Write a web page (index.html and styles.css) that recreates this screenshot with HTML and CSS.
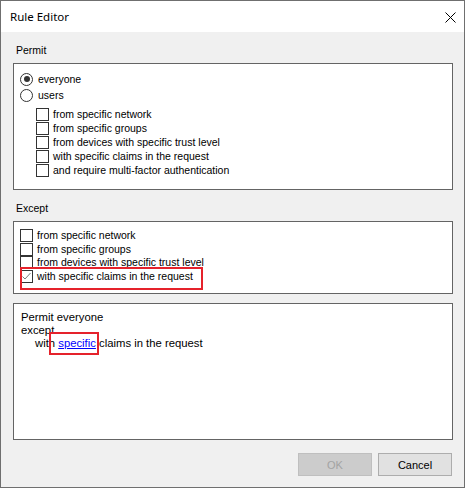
FILE: index.html
```html
<!DOCTYPE html>
<html>
<head>
<meta charset="utf-8">
<link rel="stylesheet" href="styles.css">
</head>
<body>
<div class="window">
  <div class="titlebar">
    <span class="title">Rule Editor</span>
    <svg class="close" width="11" height="11" viewBox="0 0 11 11"><path d="M0.5 0.5 L10.5 10.5 M10.5 0.5 L0.5 10.5" stroke="#000" stroke-width="1" fill="none"/></svg>
  </div>
  <div class="content">
    <div class="group-label">Permit</div>
    <div class="box permit">
      <div class="radio-row"><span class="radio checked"></span><span class="lbl">everyone</span></div>
      <div class="radio-row"><span class="radio"></span><span class="lbl">users</span></div>
      <div class="check-list indent">
        <div class="check-row"><span class="check"></span><span class="lbl">from specific network</span></div>
        <div class="check-row"><span class="check"></span><span class="lbl">from specific groups</span></div>
        <div class="check-row"><span class="check"></span><span class="lbl">from devices with specific trust level</span></div>
        <div class="check-row"><span class="check"></span><span class="lbl">with specific claims in the request</span></div>
        <div class="check-row"><span class="check"></span><span class="lbl">and require multi-factor authentication</span></div>
      </div>
    </div>
    <div class="group-label">Except</div>
    <div class="box except">
      <div class="check-list tight">
        <div class="check-row"><span class="check"></span><span class="lbl">from specific network</span></div>
        <div class="check-row"><span class="check"></span><span class="lbl">from specific groups</span></div>
        <div class="check-row"><span class="check"></span><span class="lbl">from devices with specific trust level</span></div>
        <div class="check-row"><span class="check checked"><svg width="11" height="11" viewBox="0 0 11 11"><path d="M1.5 5.5 L4 8 L9.5 2" stroke="#7a7a7a" stroke-width="1" fill="none"/></svg></span><span class="lbl">with specific claims in the request</span></div>
      </div>
      <div class="highlight hl-except"></div>
    </div>
    <div class="box summary">
      <div class="line">Permit everyone</div>
      <div class="line">except</div>
      <div class="line sub">with <a class="link" href="#">specific</a> claims in the request</div>
      <div class="highlight hl-summary"></div>
    </div>
    <div class="buttons">
      <button class="btn disabled">OK</button>
      <button class="btn">Cancel</button>
    </div>
  </div>
</div>
</body>
</html>
```

FILE: styles.css
```css
* { box-sizing: border-box; }
html, body { margin: 0; padding: 0; background: #ffffff; }
body { font-family: "Liberation Sans", Arial, sans-serif; font-size: 10.5px; color: #000; }

.window {
  width: 465px;
  height: 488px;
  border: 1px solid #6f6f6f;
  display: flex;
  flex-direction: column;
  background: #f0f0f0;
}

.titlebar {
  height: 31px;
  background: #ffffff;
  display: flex;
  align-items: center;
  justify-content: space-between;
  padding: 0 8px 0 9px;
  flex: none;
}
.title {
  font-family: "Noto Sans", "Open Sans", sans-serif;
  font-size: 11.5px;
  line-height: 16px;
  color: #000;
}
.close { display: block; margin-top: 1px; }

.content {
  flex: 1;
  padding: 0 11px 0 12px;
  display: flex;
  flex-direction: column;
}

.group-label {
  height: 31px;
  padding: 10px 0 0 3px;
  line-height: 16px;
  font-size: 10.5px;
}

.box {
  position: relative;
  background: #ffffff;
  border: 1px solid #646464;
  flex: none;
}
.permit { height: 127px; padding: 7px 0 0 6px; }
.except { height: 73px; padding: 7px 0 0 6px; }
.summary { height: 137px; margin-top: 9px; padding: 7px 0 0 7px; font-size: 11.3px; }

.radio-row {
  height: 16px;
  display: flex;
  align-items: center;
}
.radio {
  width: 13px;
  height: 13px;
  border: 1px solid #333333;
  border-radius: 50%;
  background: #fff;
  margin-right: 5px;
  display: flex;
  align-items: center;
  justify-content: center;
  flex: none;
}
.radio.checked::after {
  content: "";
  width: 6px;
  height: 6px;
  border-radius: 50%;
  background: #333333;
}

.check-list.indent { margin-top: 5px; padding-left: 16px; }
.check-row {
  height: 14px;
  display: flex;
  align-items: flex-start;
}
.tight .check-row { height: 13.5px; }
.check {
  width: 13px;
  height: 13px;
  border: 1px solid #333333;
  background: #fff;
  margin-right: 4px;
  flex: none;
  display: flex;
  align-items: center;
  justify-content: center;
}
.check svg { display: block; }
.lbl { line-height: 13px; white-space: nowrap; }

.highlight {
  position: absolute;
  border: 2px solid #e5222b;
  pointer-events: none;
}
.hl-except { left: 6px; top: 45px; width: 183px; height: 23px; }
.hl-summary { left: 35px; top: 28px; width: 50px; height: 23px; }

.line { line-height: 13px; white-space: nowrap; }
.line.sub { padding-left: 14px; }
.link { color: #0000ff; text-decoration: underline; }

.buttons {
  display: flex;
  justify-content: flex-end;
  gap: 6px;
  margin-top: 13px;
  padding-right: 1px;
}
.btn {
  width: 74px;
  height: 23px;
  font-family: "Liberation Sans", Arial, sans-serif;
  font-size: 11px;
  background: #e1e1e1;
  border: 1px solid #adadad;
  color: #000;
  padding: 0;
  margin: 0;
}
.btn.disabled {
  background: #cccccc;
  border-color: #bfbfbf;
  color: #a3a3a3;
}
```
